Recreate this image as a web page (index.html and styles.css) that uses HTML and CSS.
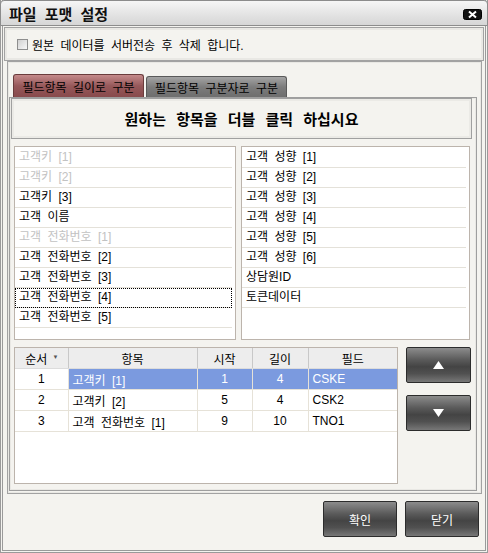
FILE: index.html
```html
<!DOCTYPE html>
<html lang="ko">
<head>
  <meta charset="UTF-8">
  <meta name="viewport" content="width=device-width, initial-scale=1.0">
  <title>파일 포맷 설정</title>
  <link rel="stylesheet" href="styles.css">
</head>
<body>
  <div class="window">
    <div class="titlebar">
      <span class="title">파일 포맷 설정</span>
      <span class="close-btn">
        <svg width="19" height="11" viewBox="0 0 19 11">
          <rect x="0.5" y="0.5" width="18" height="10" rx="2" fill="#111" stroke="#000"/>
          <path d="M6 2.5 L13 8.5 M13 2.5 L6 8.5" stroke="#fff" stroke-width="2"/>
        </svg>
      </span>
    </div>

    <div class="check-group">
      <label class="check">
        <span class="checkbox"></span>원본 데이터를 서버전송 후 삭제 합니다.
      </label>
    </div>

    <div class="main-group">
      <div class="tabs">
        <div class="tab active">필드항목 길이로 구분</div>
        <div class="tab">필드항목 구분자로 구분</div>
      </div>
      <div class="tab-page">
        <div class="hint">원하는 항목을 더블 클릭 하십시요</div>

        <div class="lists">
          <ul class="listbox">
            <li class="disabled">고객키 [1]</li>
            <li class="disabled">고객키 [2]</li>
            <li>고객키 [3]</li>
            <li>고객 이름</li>
            <li class="disabled">고객 전화번호 [1]</li>
            <li>고객 전화번호 [2]</li>
            <li>고객 전화번호 [3]</li>
            <li class="focused">고객 전화번호 [4]</li>
            <li>고객 전화번호 [5]</li>
          </ul>
          <ul class="listbox wide">
            <li>고객 성향 [1]</li>
            <li>고객 성향 [2]</li>
            <li>고객 성향 [3]</li>
            <li>고객 성향 [4]</li>
            <li>고객 성향 [5]</li>
            <li>고객 성향 [6]</li>
            <li>상담원ID</li>
            <li>토큰데이터</li>
          </ul>
        </div>

        <div class="order-row">
          <div class="grid-box">
            <table class="grid">
              <colgroup>
                <col class="c-no"><col class="c-item"><col class="c-start"><col class="c-len"><col class="c-field">
              </colgroup>
              <thead>
                <tr>
                  <th class="sort">순서<span class="sort-arrow">▼</span></th>
                  <th>항목</th>
                  <th>시작</th>
                  <th>길이</th>
                  <th>필드</th>
                </tr>
              </thead>
              <tbody>
                <tr class="selected">
                  <td class="num">1</td><td>고객키 [1]</td><td class="num">1</td><td class="num">4</td><td>CSKE</td>
                </tr>
                <tr>
                  <td class="num">2</td><td>고객키 [2]</td><td class="num">5</td><td class="num">4</td><td>CSK2</td>
                </tr>
                <tr>
                  <td class="num">3</td><td>고객 전화번호 [1]</td><td class="num">9</td><td class="num">10</td><td>TNO1</td>
                </tr>
              </tbody>
            </table>
          </div>
          <div class="move-btns">
            <button class="dark-btn move">
              <svg width="11" height="8" viewBox="0 0 11 8"><polygon points="5.5,0 11,8 0,8" fill="#fff"/></svg>
            </button>
            <button class="dark-btn move">
              <svg width="11" height="8" viewBox="0 0 11 8"><polygon points="0,0 11,0 5.5,8" fill="#fff"/></svg>
            </button>
          </div>
        </div>
      </div>
    </div>

    <div class="footer">
      <button class="dark-btn action">확인</button>
      <button class="dark-btn action">닫기</button>
    </div>
  </div>
</body>
</html>
```

FILE: styles.css
```css
body {
  margin: 0;
  font-family: "Liberation Sans", "Noto Sans CJK KR", sans-serif;
  font-size: 12px;
  word-spacing: 3px;
  color: #000;
  background-color: #f4f3ef;
}

.window {
  width: 488px;
  height: 553px;
  box-sizing: border-box;
  border: 3px double #9a9a9a;
  border-top: none;
  background-color: #f4f3ef;
  display: flex;
  flex-direction: column;
}

.titlebar {
  height: 26px;
  box-sizing: border-box;
  margin: 0 -3px;
  padding: 0 5px 0 8px;
  border: 1px solid #8c8c8c;
  border-radius: 4px 4px 0 0;
  background: linear-gradient(#f6f6f6, #e2e2e2 60%, #d6d6d6);
  display: flex;
  align-items: center;
  justify-content: space-between;
}

.title {
  font-size: 15px;
  font-weight: bold;
  word-spacing: 4px;
  color: #111;
}

.close-btn {
  display: flex;
  margin-top: 2px;
}

.check-group {
  margin: 1px 1px 0 1px;
  height: 34px;
  box-sizing: border-box;
  border: 1px solid #a2a2a2;
  box-shadow: inset 0 0 0 2px #e9e8e4;
  display: flex;
  align-items: center;
  padding-left: 12px;
}

.check {
  display: flex;
  align-items: center;
  gap: 4px;
  padding-top: 1px;
}

.checkbox {
  width: 11px;
  height: 11px;
  box-sizing: border-box;
  border: 1px solid #8e8e8e;
  background: linear-gradient(135deg, #d0d0d0, #f8f8f8);
}

.main-group {
  margin: 0 0 0 4px;
  width: 475px;
  height: 433px;
  box-sizing: border-box;
  border: 1px solid #a2a2a2;
  box-shadow: inset 0 0 0 1px #e9e8e4;
  padding: 12px 0 0 1px;
}

.tabs {
  display: flex;
  align-items: flex-end;
  gap: 2px;
  padding-left: 4px;
  height: 23px;
}

.tab {
  height: 21px;
  box-sizing: border-box;
  padding: 0 8px;
  border: 1px solid #5a5a5a;
  border-bottom: none;
  border-radius: 3px 3px 0 0;
  background: linear-gradient(#a4a4a4, #7c7c7c 50%, #6e6e6e);
  display: flex;
  align-items: center;
  white-space: nowrap;
}

.tab.active {
  height: 23px;
  width: 131px;
  justify-content: center;
  padding: 0;
  border-color: #6a3c3c;
  background: linear-gradient(#c58a8a, #96585a 50%, #884a4c);
}

.tab-page {
  width: 468px;
  height: 394px;
  box-sizing: border-box;
  border: 1px solid #9e9e9e;
  box-shadow: inset 0 0 0 1px #e9e8e4;
}

.hint {
  margin: 0 4px 0 1px;
  height: 41px;
  box-sizing: border-box;
  border: 1px solid #a0a0a0;
  box-shadow: inset 0 0 0 2px #ebeae6;
  display: flex;
  align-items: center;
  justify-content: center;
  font-size: 15px;
  font-weight: bold;
  word-spacing: 6px;
  padding-bottom: 1px;
}

.lists {
  display: flex;
  gap: 5px;
  margin: 7px 0 0 4px;
}

.listbox {
  list-style: none;
  margin: 0;
  padding: 1px 3px 0 0;
  width: 222px;
  height: 194px;
  box-sizing: border-box;
  border: 1px solid #bcb4ac;
  background-color: #fff;
}

.listbox.wide {
  width: 229px;
}

.listbox li {
  height: 20px;
  box-sizing: border-box;
  padding-left: 4px;
  border-bottom: 1px solid #e4e1d9;
  line-height: 19px;
  white-space: nowrap;
}

.listbox li.disabled {
  color: #c2c2c2;
}

.listbox li.focused {
  outline: 1px dotted #000;
  outline-offset: -1px;
}

.order-row {
  display: flex;
  gap: 8px;
  margin: 7px 0 0 4px;
}

.grid-box {
  width: 384px;
  height: 137px;
  box-sizing: border-box;
  border: 1px solid #bcb4ac;
  background-color: #fff;
}

.grid {
  border-collapse: collapse;
  table-layout: fixed;
  width: 382px;
}

.c-no { width: 53px; }
.c-item { width: 129px; }
.c-start { width: 55px; }
.c-len { width: 56px; }
.c-field { width: 89px; }

.grid th {
  height: 20px;
  padding: 0;
  font-weight: normal;
  background-color: #ededed;
  border-right: 1px solid #c8c8c8;
  border-bottom: 1px solid #dcdcdc;
  text-align: center;
}

.grid th:last-child {
  border-right: none;
}

.grid th.sort {
  position: relative;
  padding-right: 10px;
}

.sort-arrow {
  position: absolute;
  right: 9px;
  top: 6px;
  font-size: 6px;
  color: #555;
}

.grid td {
  height: 20px;
  padding: 0 0 0 4px;
  border-right: 1px solid #e6e2d8;
  border-bottom: 1px solid #e6e2d8;
  white-space: nowrap;
}

.grid td:last-child {
  border-right: none;
}

.grid td.num {
  text-align: center;
  padding: 0;
}

.grid tr.selected td {
  background-color: #7b9adf;
  color: #fff;
}

.grid tr.selected td:first-child {
  background-color: #fff;
  color: #000;
}

.move-btns {
  display: flex;
  flex-direction: column;
  gap: 12px;
}

.dark-btn {
  box-sizing: border-box;
  border: 1px solid #2c2c2c;
  border-radius: 2px;
  background: linear-gradient(#8c8c8c, #5a5a5a 35%, #444 55%, #505050 75%, #777);
  color: #fff;
  font-family: "Liberation Sans", "Noto Sans CJK KR", sans-serif;
  font-size: 12px;
  display: flex;
  align-items: center;
  justify-content: center;
  padding: 0;
}

.dark-btn.move {
  width: 65px;
  height: 36px;
}

.footer {
  display: flex;
  justify-content: flex-end;
  gap: 8px;
  margin-top: 7px;
  padding-right: 6px;
}

.dark-btn.action {
  width: 74px;
  height: 36px;
}
```
